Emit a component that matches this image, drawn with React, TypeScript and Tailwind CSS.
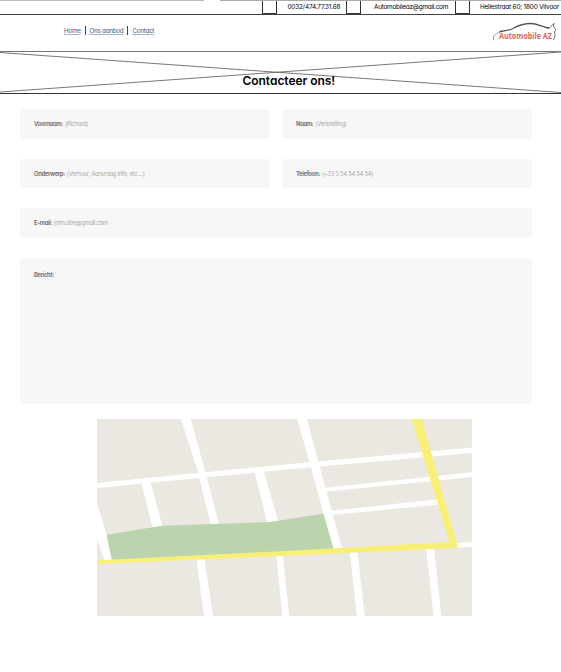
type FieldProps = { label: string; hint?: string; className: string };

function Field({ label, hint, className }: FieldProps) {
  return (
    <div className={`flex rounded-[1px] bg-[#f7f7f7] pl-[14px] text-[5.900px] leading-[8px] whitespace-nowrap ${className}`}>
      <span className="font-bold tracking-[-0.360px] text-[#777]">{label}</span>
      {hint && <span className="ml-[2px] tracking-[-0.300px] text-[#aaa]">{hint}</span>}
    </div>
  );
}

function Logo() {
  return (
    <svg className="h-[22px] w-[68px]" viewBox="491 20 68 22">
      <g fill="none" stroke="#555" strokeLinecap="round">
        <path stroke="#888" strokeWidth="0.9" d="M493.500 40C492.500 36 496 32.500 502 31.500" />
        <path strokeWidth="1.3" d="M500 31.500C505 31 509 30.500 513 28.500C519 25 525 23.500 531 23.500C538 23.500 542 27.500 549 28" />
        <path strokeWidth="0.9" d="M545 27.500C551 29.500 550 26 554 23.500C552.500 28 556 28 555.500 30.500C553 32 557 35 553.500 39.500" />
      </g>
      <text x="499" y="39" textLength="53" lengthAdjust="spacingAndGlyphs" fontFamily="Open Sans, sans-serif" fontWeight="700" fontSize="8" fill="#df6657">
        Automobile AZ
      </text>
    </svg>
  );
}

function StreetMap() {
  return (
    <svg className="ml-[97px] mt-[15px] block h-[197px] w-[375px]" viewBox="97 419 375 197">
      <rect x="97" y="419" width="375" height="197" fill="#ebe8e1" />
      <g fill="#fff">
        <path d="M97 483L290 464L472 447.500V453L290 469.300L97 488Z" />
        <path d="M181 419H190.700L205.300 472L219.300 525H210.700L198 472Z" />
        <path d="M141.300 482H150.500L162.700 527H152.300Z" />
        <path d="M254.300 471H263.600L278.700 523H267.300Z" />
        <path d="M297.300 419H306.700L342 548.500H333.500Z" />
        <path d="M97 503.500L106.700 534.700L112 561H104.700L97 538.500Z" />
        <path d="M325 487.800L472 472.300V477L326 491.700Z" />
        <path d="M331 510.800L445 498.500V504L332 515Z" />
        <path d="M455 543.200L472 542V546.700L455 547.500Z" />
        <path d="M196.200 557H204.100L213 616H204Z" />
        <path d="M276.200 553H282.500L289.300 616H282.300Z" />
        <path d="M349.600 551H357.200L364.700 616H357Z" />
        <path d="M426 547H434L441.300 616H433.700Z" />
      </g>
      <path fill="#bcd4ad" d="M106.700 534.700L162 525.800L270 522L323.300 513.700L333.500 549L112 560.500Z" />
      <path fill="#f9ef75" d="M97 560.300L290 550.700L449.500 542L411.700 419H421.700L458 547.700L290 555.500L97 564Z" />
    </svg>
  );
}

export default function App() {
  return (
    <div className="h-[672px] w-[561px] overflow-hidden bg-white font-['Inter',sans-serif] text-black [font-feature-settings:'cv11']">
      <div className="flex h-[15px] items-start whitespace-nowrap border-b border-[#444] text-[6.400px] leading-[12px]">
        <div className="h-px w-[204px] shrink-0 bg-[#bbb]" />
        <div className="ml-[16px] flex h-[14px] w-[341px] shrink-0 border-t border-[#aaa]">
          <div className="ml-[41.500px] h-[13px] w-[15px] shrink-0 border border-t-0 border-[#333]" />
          <span className="ml-[11px] w-[58px] shrink-0 tracking-[-0.160px]">0032/474.77.31.68</span>
          <div className="h-[13px] w-[15px] shrink-0 border border-t-0 border-[#333]" />
          <span className="ml-[13.500px] w-[80.500px] shrink-0 tracking-[-0.240px]">Automobileaz@gmail.com</span>
          <div className="h-[13px] w-[15px] shrink-0 border border-t-0 border-[#333]" />
          <span className="ml-[10.500px] shrink-0 tracking-[-0.180px]">Hellestraat 60; 1800 Vilvoor</span>
        </div>
      </div>

      <header className="flex h-[37px] justify-between border-b border-[#777] pl-[64px] pr-[2px]">
        <nav className="mt-[11px] flex h-[9px] items-center whitespace-nowrap text-[6.300px] leading-[8px] tracking-[-0.270px] text-[#38587c]">
          <a className="underline decoration-[#9db4cf] decoration-[0.500px]">Home</a>
          <span className="mx-[4px] h-[9px] w-px bg-[#444]" />
          <a className="underline decoration-[#9db4cf] decoration-[0.500px]">Ons aanbod</a>
          <span className="mx-[4px] h-[9px] w-px bg-[#444]" />
          <a className="underline decoration-[#9db4cf] decoration-[0.500px]">Contact</a>
        </nav>
        <div className="mt-[5px]">
          <Logo />
        </div>
      </header>

      <section className="relative h-[42px] border-b border-[#333]">
        <svg className="absolute inset-0 h-[41px] w-[561px]" viewBox="0 0 561 41" fill="none" stroke="#555" strokeWidth="0.8">
          <path d="M0 .5L561 40.500M0 40L561 0" />
        </svg>
        <h1 className="relative whitespace-nowrap pl-[242.500px] pt-[21px] text-[12px] font-semibold leading-[16px] tracking-[-0.040px]">Contacteer ons!</h1>
      </section>

      <form className="ml-[20px] mt-[15px] grid w-[512px] grid-cols-2 gap-x-[12px] gap-y-[20px]">
        <Field label="Voornaam:" hint="(Richard)" className="h-[29.500px] pt-[11px]" />
        <Field label="Naam:" hint="(Versnelling)" className="h-[29.500px] pt-[11px]" />
        <Field label="Onderwerp:" hint="(Verhuur, Aanvraag info, etc ...)" className="h-[29.500px] pt-[11px]" />
        <Field label="Telefoon:" hint="(+33 3 54 54 54 54)" className="h-[29.500px] pt-[11px]" />
        <Field label="E-mail:" hint="john.doe@gmail.com" className="col-span-2 h-[29.500px] pt-[11px]" />
        <Field label="Bericht:" className="col-span-2 h-[146.500px] pt-[13px]" />
      </form>

      <StreetMap />
    </div>
  );
}
